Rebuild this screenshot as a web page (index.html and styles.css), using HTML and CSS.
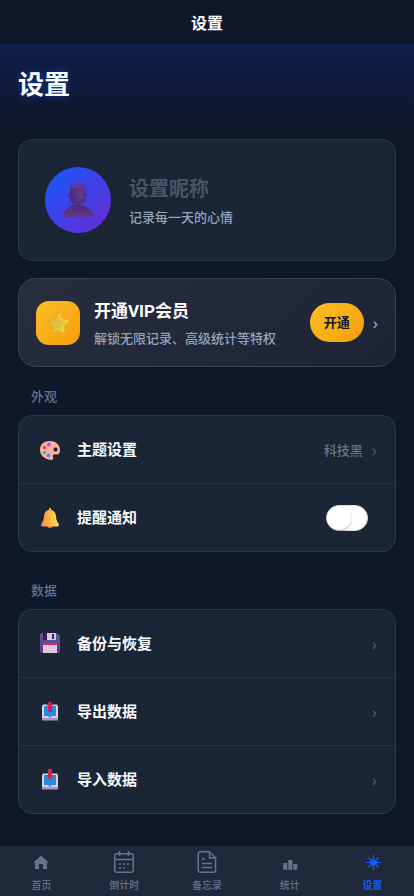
FILE: index.html
```
<!DOCTYPE html>
<html lang="zh-CN">
<head>
    <meta charset="UTF-8">
    <meta name="viewport" content="width=device-width, initial-scale=1.0">
    <title>设置</title>
    <link rel="stylesheet" href="styles.css">
</head>
<body>
    <header class="nav-bar">设置</header>

    <main class="page">
        <div class="page-header">
            <h1>设置</h1>
        </div>

        <div class="content">
            <!-- Profile -->
            <section class="card profile">
                <div class="avatar">
                    <svg width="32" height="34" viewBox="0 0 32 34">
                        <defs>
                            <radialGradient id="head" cx="65%" cy="40%" r="70%">
                                <stop offset="0" stop-color="#633a91"/>
                                <stop offset="1" stop-color="#4b2c7d"/>
                            </radialGradient>
                            <linearGradient id="bust" x1="0" y1="0" x2="0" y2="1">
                                <stop offset="0" stop-color="#4c2b78"/>
                                <stop offset="1" stop-color="#613889"/>
                            </linearGradient>
                        </defs>
                        <path d="M0 34C2 27 7 23 12 22h7c6 1 11 5 13 12z" fill="url(#bust)"/>
                        <circle cx="8" cy="12" r="2" fill="#532d78"/>
                        <circle cx="23" cy="12" r="2" fill="#35205d"/>
                        <path d="M8 7q0-6 5-6h6q5 0 5 6v8q0 7-8 7t-8-7z" fill="url(#head)"/>
                        <path d="M9 5q1-4 5-4h5q4 0 4 5-7-2-14-1z" fill="#6b4191" opacity=".6"/>
                    </svg>
                </div>
                <div class="profile-info">
                    <input class="nickname" type="text" placeholder="设置昵称" aria-label="设置昵称">
                    <p class="motto">记录每一天的心情</p>
                </div>
            </section>

            <!-- VIP -->
            <section class="vip">
                <div class="vip-icon">
                    <svg width="24" height="24" viewBox="0 0 24 24">
                        <defs>
                            <linearGradient id="star" x1="0" y1="0" x2="1" y2="1">
                                <stop offset="0" stop-color="#e9b72b"/>
                                <stop offset=".5" stop-color="#dfc13c"/>
                                <stop offset="1" stop-color="#f3d540"/>
                            </linearGradient>
                        </defs>
                        <path d="M12.500 1.500l3.300 6.500 7 1.500-4.800 5.500.4 7.500-6.400-2.500-6.500 3 1-7.500L1 10l7.500-1.500z" fill="url(#star)" stroke="#dfa72b" stroke-width="1" stroke-linejoin="round"/>
                        <path d="M13 2.500l2.500 6 7 1.500-5 5 .5 7" fill="none" stroke="#ffdf4b" stroke-linejoin="round"/>
                    </svg>
                </div>
                <div class="vip-info">
                    <h2>开通VIP会员</h2>
                    <p>解锁无限记录、高级统计等特权</p>
                </div>
                <button class="vip-button" type="button">开通</button>
                <span class="arrow arrow-light">›</span>
            </section>

            <!-- Appearance -->
            <h3 class="group-title">外观</h3>
            <section class="card group">
                <a class="row" href="#theme">
                    <svg class="row-icon" width="22" height="22" viewBox="0 0 22 22">
                        <path d="M1 11C1 5 5 2 11 2s10 4 10 9c0 4-2 5-4 4.500-2-.5-4 .2-3 2.500 1 2-.5 3-2 3C5 20 1 16 1 11z" fill="#ffb09e"/>
                        <circle cx="16.500" cy="10.500" r="2.500" fill="#e59a8b"/>
                        <circle cx="16.500" cy="10.500" r="1.900" fill="#1a2434"/>
                        <circle cx="10" cy="5.500" r="2" fill="#b653e8"/>
                        <circle cx="5.500" cy="8.500" r="1.800" fill="#f0308b"/>
                        <circle cx="5.500" cy="13.500" r="1.800" fill="#37b8b2"/>
                        <circle cx="9.500" cy="16.500" r="2" fill="#3d92f5"/>
                    </svg>
                    <span class="row-label">主题设置</span>
                    <span class="row-value">科技黑</span>
                    <span class="arrow">›</span>
                </a>
                <div class="row">
                    <svg class="row-icon" width="22" height="22" viewBox="0 0 22 22">
                        <defs>
                            <linearGradient id="bell" x1="0" y1="0" x2="1" y2="0">
                                <stop offset="0" stop-color="#f08b42"/>
                                <stop offset=".55" stop-color="#ffc044"/>
                                <stop offset="1" stop-color="#ffe05c"/>
                            </linearGradient>
                        </defs>
                        <circle cx="11" cy="18.500" r="2.500" fill="#e8743b"/>
                        <path d="M10 3V1.500q1-1.500 2 0V3c4 .5 5 4 5.200 8 .2 2 .8 3.500 2.300 5.500q1 2.500-1 3h-15q-2-.5-1-3C4 14.500 4.600 13 4.800 11 5 7 6 3.500 10 3z" fill="url(#bell)"/>
                        <path d="M3 16.500h16" stroke="#f09535" opacity=".5"/>
                    </svg>
                    <label class="row-label" for="notify">提醒通知</label>
                    <input class="switch" type="checkbox" id="notify">
                </div>
            </section>

            <!-- Data -->
            <h3 class="group-title">数据</h3>
            <section class="card group">
                <a class="row" href="#backup">
                    <svg class="row-icon" width="22" height="22" viewBox="0 0 22 22">
                        <defs>
                            <linearGradient id="disk" x1="0" y1="0" x2="0" y2="1">
                                <stop offset="0" stop-color="#5458a5"/>
                                <stop offset="1" stop-color="#683982"/>
                            </linearGradient>
                        </defs>
                        <path d="M2.500 0H18l3 3v15.500q0 1.500-1.500 1.500h-17Q1 20 1 18.500v-17Q1 0 2.500 0z" fill="url(#disk)"/>
                        <path d="M4 0h13v7H4z" fill="#33204f"/>
                        <path d="M8 0h9v7H8z" fill="#d6cadf"/>
                        <path d="M13 1h2v5h-2z" fill="#3b2857"/>
                        <path d="M4 10h14v10H4z" fill="#d9c9e5"/>
                        <path d="M4 10h14v2H4z" fill="#ed234d"/>
                    </svg>
                    <span class="row-label">备份与恢复</span>
                    <span class="arrow">›</span>
                </a>
                <a class="row" href="#export">
                    <svg class="row-icon" width="22" height="22" viewBox="0 0 22 22">
                        <path d="M4 3.500h14l1 2V19H3V5.500z" fill="#d9d2e3"/>
                        <path d="M3 17h16v2.500H3z" fill="#ab91ca"/>
                        <path d="M5 5h12v10h-4l-2 2-2-2H5z" fill="#268bdd"/>
                        <path d="M11 0l4 4.500h-2V11H9V4.500H7z" fill="#dd214f"/>
                    </svg>
                    <span class="row-label">导出数据</span>
                    <span class="arrow">›</span>
                </a>
                <a class="row" href="#import">
                    <svg class="row-icon" width="22" height="22" viewBox="0 0 22 22">
                        <path d="M4 4.500h14l1 2V20H3V6.500z" fill="#d9d2e3"/>
                        <path d="M3 18h16v2.500H3z" fill="#ab91ca"/>
                        <path d="M5 6h12v10h-4l-2 2-2-2H5z" fill="#268bdd"/>
                        <path d="M9 0h4v6h2l-4 5-4-5h2z" fill="#dd214f"/>
                    </svg>
                    <span class="row-label">导入数据</span>
                    <span class="arrow">›</span>
                </a>
            </section>
        </div>
    </main>

    <nav class="tab-bar">
        <a class="tab" href="#home">
            <svg width="24" height="24" viewBox="0 0 24 24" fill="currentColor">
                <path d="M12 5.500l7 6.500v1h-1v6h-4v-5h-4v5H6v-6H5v-1z"/>
            </svg>
            <span>首页</span>
        </a>
        <a class="tab" href="#countdown">
            <svg width="24" height="24" viewBox="0 0 24 24" fill="none" stroke="currentColor" stroke-width="1.500">
                <rect x="2.700" y="3.700" width="18.600" height="18.600" rx="2"/>
                <path d="M3 9.500h18M7.500 1v5M16.500 1v5"/>
                <path d="M7 14h2M11 14h2M15 14h2M7 18h2M11 18h2"/>
            </svg>
            <span>倒计时</span>
        </a>
        <a class="tab" href="#memo">
            <svg width="24" height="24" viewBox="0 0 24 24" fill="none" stroke="currentColor" stroke-width="1.500">
                <path d="M5 1.700h9.500l6 6V20q0 2.300-2.300 2.300H5.500q-2.300 0-2.300-2.300V4Q3.200 1.700 5.500 1.700z"/>
                <path d="M14.500 2v6h6M7 9h3M7 13.500h10M7 17.500h10"/>
            </svg>
            <span>备忘录</span>
        </a>
        <a class="tab" href="#stats">
            <svg width="24" height="24" viewBox="0 0 24 24" fill="currentColor">
                <path d="M5.300 13h4v6.700h-4zM10.300 10h4v9.700h-4zM15.300 14h4v5.700h-4z"/>
            </svg>
            <span>统计</span>
        </a>
        <a class="tab active" href="#settings">
            <svg width="24" height="24" viewBox="0 0 24 24" fill="currentColor">
                <circle cx="12.500" cy="12.500" r="3.300"/>
                <path d="M12.500 5v15M5 12.500h15M7.500 7.500l10 10M17.500 7.500l-10 10" stroke="currentColor" stroke-width="1.200"/>
            </svg>
            <span>设置</span>
        </a>
    </nav>
</body>
</html>
```
FILE: styles.css
```
* {
    box-sizing: border-box;
}

body {
    margin: 0;
    min-height: 100vh;
    display: flex;
    flex-direction: column;
    background: #0f172a;
    color: #f8fafc;
    font-family: 'Noto Sans', 'Noto Sans CJK SC', sans-serif;
}

h1, h2, h3, p {
    margin: 0;
}

a {
    color: inherit;
    text-decoration: none;
}

.nav-bar {
    height: 44px;
    line-height: 46px;
    text-align: center;
    font-size: 16px;
    font-weight: 700;
    background: #0f172a;
    color: #fff;
}

.page {
    flex: 1;
}

.page-header {
    padding: 22px 18px 18px;
    background: linear-gradient(180deg, rgba(19, 71, 255, 0.15), transparent);
}

.page-header h1 {
    font-size: 26px;
    line-height: 36px;
    font-weight: 700;
    color: #fff;
    text-shadow: 0 0 9px rgba(26, 92, 255, 0.5);
}

.content {
    padding: 19px 18px 32px;
}

.card {
    background: #1a2535;
    border: 1px solid #2c3749;
    border-radius: 14px;
}

/* Profile */
.profile {
    display: flex;
    align-items: center;
    gap: 18px;
    padding: 27px 26px;
    margin-bottom: 17px;
}

.avatar {
    flex: none;
    display: flex;
    align-items: center;
    justify-content: center;
    width: 66px;
    height: 66px;
    border-radius: 50%;
    background: linear-gradient(135deg, #135bff, #6d28d2);
}

.profile-info {
    flex: 1;
    min-width: 0;
}

.nickname {
    display: block;
    width: 100%;
    height: 30px;
    padding: 0;
    border: none;
    outline: none;
    background: none;
    font-family: inherit;
    font-size: 20px;
    font-weight: 700;
    color: #fff;
}

.nickname::placeholder {
    color: #475569;
}

.motto {
    margin-top: 4px;
    font-size: 13px;
    line-height: 20px;
    font-weight: 500;
    color: #94a3b8;
}

/* VIP */
.vip {
    display: flex;
    align-items: center;
    padding: 17px;
    border: 1px solid #374151;
    border-radius: 18px;
    background: linear-gradient(135deg, #282d3e, #1c2435);
}

.vip-icon {
    flex: none;
    display: flex;
    align-items: center;
    justify-content: center;
    width: 44px;
    height: 44px;
    margin-right: 14px;
    border-radius: 13px;
    background: linear-gradient(135deg, #fbbf24, #f59e0b);
}

.vip-info {
    flex: 1;
    min-width: 0;
}

.vip-info h2 {
    font-family: Roboto, 'Noto Sans CJK SC', sans-serif;
    font-size: 17px;
    line-height: 30px;
    font-weight: 700;
    color: #fff;
}

.vip-info p {
    margin-top: 2px;
    font-size: 13px;
    line-height: 21px;
    font-weight: 500;
    color: #94a3b8;
}

.vip-button {
    flex: none;
    padding: 10px 14px;
    border: none;
    border-radius: 20px;
    background: linear-gradient(135deg, #fbbf24, #f59e0b);
    color: #111827;
    font-family: inherit;
    font-size: 13px;
    line-height: 19px;
    font-weight: 700;
    cursor: pointer;
}

.arrow {
    margin-left: 9px;
    font-size: 16px;
    line-height: 22px;
    font-weight: 500;
    color: #475569;
}

.arrow-light {
    color: #94a3b8;
}

/* Setting groups */
.group-title {
    padding: 0 13px;
    margin: 20px 0 9px;
    font-size: 13px;
    line-height: 19px;
    font-weight: 500;
    color: #64748b;
}

.group + .group-title {
    margin-top: 29px;
}

.row {
    display: flex;
    align-items: center;
    height: 67px;
    padding: 0 18px 0 20px;
}

.row + .row {
    height: 68px;
    border-top: 1px solid #263142;
}

.row-icon {
    flex: none;
    margin-right: 16px;
}

.row-label {
    flex: 1;
    padding-bottom: 2px;
    font-size: 15px;
    font-weight: 600;
    color: #f8fafc;
}

.row-value {
    font-size: 13px;
    font-weight: 500;
    color: #64748b;
}

.switch {
    appearance: none;
    flex: none;
    width: 42px;
    height: 26px;
    margin: 0 9px 0 0;
    border: 1px solid #dfdfdf;
    border-radius: 13px;
    background: #fdfdfd;
    cursor: pointer;
}

.switch::before {
    content: '';
    display: block;
    width: 24px;
    height: 24px;
    border-radius: 50%;
    background: #fff;
    box-shadow: 0 1px 2px rgba(0, 0, 0, 0.3);
}

.switch:checked {
    border-color: #135bff;
    background: #135bff;
}

.switch:checked::before {
    margin-left: auto;
}

/* Tab bar */
.tab-bar {
    position: sticky;
    bottom: 0;
    display: flex;
    height: 50px;
    background: #1e293b;
}

.tab {
    flex: 1;
    display: flex;
    flex-direction: column;
    align-items: center;
    padding-top: 4px;
    font-size: 10px;
    line-height: 14px;
    font-weight: 500;
    color: #64748b;
}

.tab span {
    margin-top: 4px;
}

.tab.active {
    color: #135bff;
    font-weight: 700;
}
```
